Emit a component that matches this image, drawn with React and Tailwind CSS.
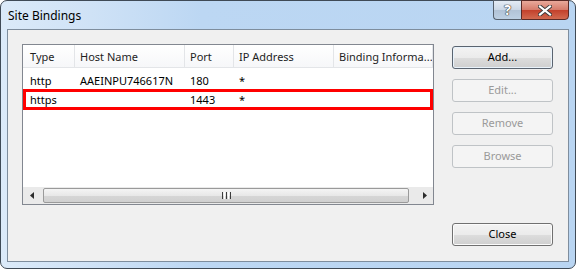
import React from "react";

const columns = [
  { key: "type", label: "Type", width: "w-[52px]", pad: "pl-[7px]" },
  { key: "host", label: "Host Name", width: "w-[110px]", pad: "pl-[5px]" },
  { key: "port", label: "Port", width: "w-[49px]", pad: "pl-[5px]" },
  { key: "ip", label: "IP Address", width: "w-[100px]", pad: "pl-[5px]" },
  { key: "info", label: "Binding Informa...", width: "w-[99px]", pad: "pl-[5px]" },
];

const bindings = [
  { type: "http", host: "AAEINPU746617N", port: "180", ip: "*", info: "" },
  { type: "https", host: "", port: "1443", ip: "*", info: "", marked: true },
];

const DialogButton = ({ label, disabled, isDefault }) => {
  if (disabled) {
    return (
      <div className="h-[23px] w-[101px] flex items-center justify-center rounded-[3px] border border-[#bfc3c6] bg-[#f4f4f4] text-[#9a9a9a]">
        {label}
      </div>
    );
  }
  return (
    <div
      className={`h-[23px] w-[101px] flex items-center justify-center rounded-[3px] border bg-[linear-gradient(#f3f3f3_0%,#ebebeb_50%,#dddddd_51%,#cfcfcf_100%)] text-black ${
        isDefault ? "border-[#5a6470] shadow-[inset_0_0_0_1px_#e8f2fb]" : "border-[#707070] shadow-[inset_0_0_0_1px_#fbfbfb]"
      }`}
    >
      {label}
    </div>
  );
};

const App = () => {
  return (
    <div className="w-[576px] h-[269px] bg-white">
      <div
        className="w-[576px] h-[269px] flex flex-col rounded-[7px] border border-[#3f4a56] bg-[linear-gradient(90deg,#dbeaf9_0px,#cfe2f6_90px,#bcd7f3_200px,#b9d5f2_100%)] text-[11px] text-black"
        style={{ fontFamily: "'Noto Sans', 'Open Sans', sans-serif" }}
      >
        {/* title bar */}
        <div className="h-[28px] flex items-start pl-[7px] pr-[6px]">
          <div className="mt-[7px] text-[12px] leading-[16px] text-black">Site Bindings</div>
          <div className="ml-auto -mt-px flex">
            <div className="w-[28px] h-[20px] flex items-center justify-center rounded-bl-[4px] border border-[#56606c] border-r-0 bg-[linear-gradient(#e4ecf5_0%,#ccd8e6_48%,#b2c3d6_52%,#bdd0e3_100%)]">
              <span className="text-[14px] font-bold leading-none text-white [text-shadow:0_0_1px_#333,0_0_1px_#333,0_0_1px_#333]">?</span>
            </div>
            <div className="w-[48px] h-[20px] flex items-center justify-center rounded-br-[4px] border border-[#5a2a26] bg-[linear-gradient(#e9a99b_0%,#d67c6b_48%,#c3412c_52%,#d26a50_100%)]">
              <svg width="14" height="11" viewBox="0 0 14 11">
                <path d="M2 1.5 L12 9.5 M12 1.5 L2 9.5" stroke="#3a3a3a" strokeWidth="4" strokeLinecap="square" />
                <path d="M2 1.5 L12 9.5 M12 1.5 L2 9.5" stroke="#ffffff" strokeWidth="2.2" strokeLinecap="square" />
              </svg>
            </div>
          </div>
        </div>

        {/* client area */}
        <div className="mx-[6px] mb-[6px] flex-1 flex border border-[#7e8d9d] bg-[#f0f0f0] pt-[14px] pl-[14px] pr-[14px] pb-[15px]">
          {/* list view */}
          <div className="w-[412px] h-[161px] flex flex-col border border-[#828790] bg-white">
            <div className="flex h-[23px] border-b border-[#e3e5e8] bg-[linear-gradient(#ffffff,#f6f7f9)]">
              {columns.map((col) => (
                <div
                  key={col.key}
                  className={`${col.width} ${col.pad} pt-[2px] shrink-0 flex items-center border-r border-[#e3e5e8] whitespace-nowrap overflow-hidden text-[#1e1e1e]`}
                >
                  {col.label}
                </div>
              ))}
            </div>
            <div className="flex-1 pt-[2px]">
              {bindings.map((row) => (
                <div key={row.type} className="relative flex h-[19px]">
                  {columns.map((col) => (
                    <div
                      key={col.key}
                      className={`${col.width} ${col.pad} pt-[3px] shrink-0 flex items-center whitespace-nowrap overflow-hidden`}
                    >
                      {row[col.key]}
                    </div>
                  ))}
                  {row.marked && (
                    <div className="absolute left-0 right-0 top-0 h-[21px] border-[3px] border-[#ff0000]" />
                  )}
                </div>
              ))}
            </div>
            {/* horizontal scrollbar */}
            <div className="h-[17px] flex bg-[#eaeaea]">
              <div className="w-[17px] flex items-center justify-center">
                <svg width="4" height="7" viewBox="0 0 4 7">
                  <path d="M4 0 L0 3.5 L4 7 Z" fill="#2c2c2c" />
                </svg>
              </div>
              <div className="flex-1 flex items-center pl-[3px]">
                <div className="w-[366px] h-[15px] flex items-center justify-center rounded-[2px] border border-[#9a9a9a] bg-[linear-gradient(#f4f4f4_0%,#e8e8e8_50%,#d6d6d6_51%,#d0d0d0_100%)]">
                  <div className="flex gap-[1px]">
                    <div className="w-[1px] h-[7px] bg-[#3d3d3d]" />
                    <div className="w-[1px] h-[7px] bg-[#ffffff]" />
                    <div className="w-[1px] h-[7px] bg-[#3d3d3d]" />
                    <div className="w-[1px] h-[7px] bg-[#ffffff]" />
                    <div className="w-[1px] h-[7px] bg-[#3d3d3d]" />
                  </div>
                </div>
              </div>
              <div className="w-[17px] flex items-center justify-center">
                <svg width="4" height="7" viewBox="0 0 4 7">
                  <path d="M0 0 L4 3.5 L0 7 Z" fill="#2c2c2c" />
                </svg>
              </div>
            </div>
          </div>

          {/* buttons */}
          <div className="ml-[18px] flex flex-col gap-[10px] pt-[2px]">
            <DialogButton label="Add..." isDefault />
            <DialogButton label="Edit..." disabled />
            <DialogButton label="Remove" disabled />
            <DialogButton label="Browse" disabled />
            <div className="mt-auto">
              <DialogButton label="Close" />
            </div>
          </div>
        </div>
      </div>
    </div>
  );
};

export default App;
